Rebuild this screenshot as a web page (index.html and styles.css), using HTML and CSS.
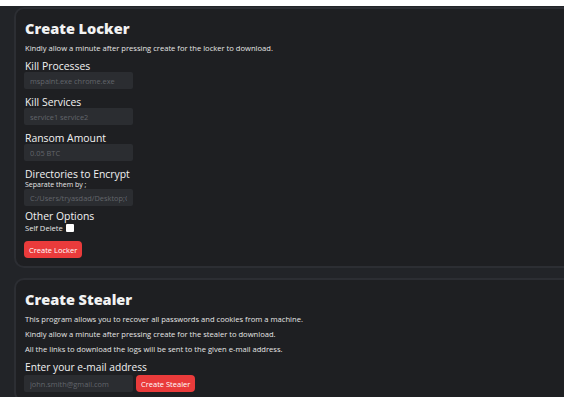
FILE: index.html
```html
<!DOCTYPE html>
<html lang="en">
<head>
    <meta charset="UTF-8">
    <meta name="viewport" content="width=device-width, initial-scale=1.0">
    <title>Builder</title>
    <link rel="stylesheet" href="styles.css">
</head>
<body>
    <div class="page">
        <div class="card">
            <h2>Create Locker</h2>
            <p class="info">Kindly allow a minute after pressing create for the locker to download.</p>

            <label class="campo">Kill Processes</label>
            <input type="text" placeholder="mspaint.exe chrome.exe">

            <label class="campo">Kill Services</label>
            <input type="text" placeholder="service1 service2">

            <label class="campo">Ransom Amount</label>
            <input type="text" placeholder="0.05 BTC">

            <label class="campo">Directories to Encrypt</label>
            <span class="dica">Separate them by ;</span>
            <input type="text" class="pastas" placeholder="C:/Users/tryasdad/Desktop;C:/Users/tryasdad/Documents">

            <label class="campo opcoes">Other Options</label>
            <div class="opcao">Self Delete <input type="checkbox"></div>

            <button>Create Locker</button>
        </div>

        <div class="card">
            <h2>Create Stealer</h2>
            <p class="info">This program allows you to recover all passwords and cookies from a machine.</p>
            <p class="info">Kindly allow a minute after pressing create for the stealer to download.</p>
            <p class="info">All the links to download the logs will be sent to the given e-mail address.</p>

            <label class="campo email">Enter your e-mail address</label>
            <div class="linha">
                <input type="text" placeholder="john.smith@gmail.com">
                <button>Create Stealer</button>
            </div>
        </div>
    </div>
</body>
</html>
```

FILE: styles.css
```css
body {
    margin: 0;
    background-color: #ffffff;
    font-family: "Open Sans", Arial, sans-serif;
    color: #f2f2f2;
}
.page {
    margin-top: 6px;
    width: 550px;
    height: 390px;
    padding: 1px 0 0 14px;
    background: #222428;
    overflow: hidden;
}
.card {
    width: 600px;
    background: #1e1f22;
    border: 2px solid #2c2e33;
    border-radius: 10px;
    padding: 9px 10px 8px 9px;
    margin-bottom: 10px;
    box-sizing: border-box;
}
h2 {
    font-size: 14.5px;
    font-weight: 800;
    margin: 0 0 4px 0;
    line-height: 22px;
}
.info {
    font-size: 7.6px;
    margin: 0 0 6px 0;
    line-height: 9px;
    color: #e6e6e6;
}
.campo {
    display: block;
    font-size: 10.4px;
    font-weight: 500;
    line-height: 11px;
    margin-top: 8px;
}
.opcoes {
    margin-top: 5px;
}
.email {
    font-weight: 400;
    font-size: 10.2px;
}
.dica {
    display: block;
    font-size: 7px;
    line-height: 9px;
    color: #e6e6e6;
}
input[type="text"] {
    display: block;
    width: 109px;
    height: 17px;
    box-sizing: border-box;
    margin: 0 0 0 -1px;
    padding: 0 6px;
    background: #2b2d31;
    border: none;
    border-radius: 2px;
    font-family: "Open Sans", Arial, sans-serif;
    font-size: 7.4px;
    color: #cccccc;
}
.pastas {
    margin-top: 3px;
}
input::placeholder {
    color: #62656b;
}
.opcao {
    font-size: 7.6px;
    line-height: 10px;
    margin-top: 1px;
    color: #e6e6e6;
    display: flex;
    align-items: center;
    gap: 3px;
}
input[type="checkbox"] {
    appearance: none;
    width: 8px;
    height: 8px;
    margin: 0;
    background: #ffffff;
    border-radius: 1px;
}
button {
    font-family: "Open Sans", Arial, sans-serif;
    font-size: 7.5px;
    background-color: #ea3b3b;
    color: white;
    height: 17px;
    padding: 0 5px;
    border: none;
    border-radius: 4px;
    margin: 8px 0 0 -1px;
}
.linha {
    display: flex;
    gap: 3px;
    align-items: center;
    margin-top: 2px;
}
.linha button {
    margin: 0;
}
```
